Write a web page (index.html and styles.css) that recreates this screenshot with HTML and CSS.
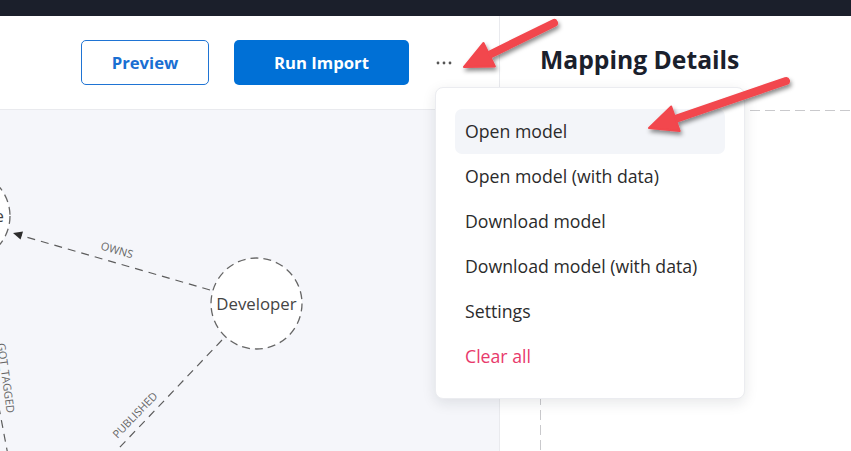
FILE: index.html
```html
<!DOCTYPE html>
<html lang="en">
<head>
<meta charset="utf-8">
<title>Mapping</title>
<link rel="stylesheet" href="styles.css">
</head>
<body>
<div class="topbar"></div>
<div class="main">
  <section class="left">
    <header class="toolbar">
      <button class="btn btn-outline">Preview</button>
      <button class="btn btn-primary">Run Import</button>
      <button class="more" aria-label="More">
        <svg width="16" height="4" viewBox="0 0 16 4"><circle cx="2" cy="2" r="1.4"/><circle cx="8" cy="2" r="1.4"/><circle cx="14" cy="2" r="1.4"/></svg>
      </button>
    </header>
    <div class="canvas">
      <svg class="graph" width="499" height="341" viewBox="0 0 499 341">
        <g class="edge">
          <line x1="-19.5" y1="200" x2="10.8" y2="360"/>
          <line x1="210" y1="180" x2="21" y2="125.5"/>
          <line x1="222" y1="230" x2="100" y2="358"/>
        </g>
        <polygon class="head" points="13,123 23,121.5 20.5,129.5"/>
        <text class="elabel" x="117" y="144" transform="rotate(16 117 140)">OWNS</text>
        <text class="elabel" x="135" y="309" transform="rotate(-46 135 305)">PUBLISHED</text>
        <text class="elabel" x="6" y="272" transform="rotate(82 6 268)">GOT_TAGGED</text>
        <circle class="node" cx="-35" cy="106" r="45"/>
        <text class="nlabel end" x="4" y="112">Package</text>
        <circle class="node" cx="256.5" cy="193.5" r="45.5"/>
        <text class="nlabel" x="256.5" y="199.5">Developer</text>
      </svg>
    </div>
  </section>
  <section class="right">
    <div class="right-head"><h2 class="title">Mapping Details</h2></div>
    <div class="dropzone"></div>
  </section>
</div>
<div class="menu">
  <div class="item active">Open model</div>
  <div class="item">Open model (with data)</div>
  <div class="item">Download model</div>
  <div class="item">Download model (with data)</div>
  <div class="item">Settings</div>
  <div class="item danger">Clear all</div>
</div>
<svg class="annot" width="851" height="451" viewBox="0 0 851 451">
  <defs>
    <filter id="sh" x="-20%" y="-20%" width="140%" height="140%">
      <feDropShadow dx="1.5" dy="3" stdDeviation="2" flood-color="#000" flood-opacity="0.45"/>
    </filter>
  </defs>
  <g filter="url(#sh)" class="arrow">
    <line x1="554" y1="23" x2="490" y2="54.5"/>
    <polygon points="464,67 483.5,43 494.9,66.4"/>
  </g>
  <g filter="url(#sh)" class="arrow">
    <line x1="786" y1="81" x2="676" y2="118.8"/>
    <polygon points="649,128 671.2,106.5 679.7,131.1"/>
  </g>
</svg>
</body>
</html>
```
FILE: styles.css
```css
* { box-sizing: border-box; margin: 0; padding: 0; }
html, body { width: 851px; height: 451px; overflow: hidden; }
body {
  font-family: "Open Sans", "Noto Sans", sans-serif;
  background: #fff;
  color: #2b2b2b;
  position: relative;
}
.topbar { height: 16px; background: #1b1f2b; }
.main { display: flex; height: 435px; }
.left {
  width: 500px;
  flex: none;
  border-right: 1px solid #e9eaee;
  display: flex;
  flex-direction: column;
}
.toolbar {
  height: 94px;
  flex: none;
  border-bottom: 1px solid #e9eaee;
  display: flex;
  align-items: center;
  justify-content: flex-end;
  padding-right: 47px;
  background: #fff;
}
.btn {
  height: 45px;
  border-radius: 5px;
  font-family: inherit;
  font-weight: 700;
  font-size: 16.7px;
  cursor: pointer;
}
.btn-outline {
  width: 128px;
  border: 1px solid #1f74d4;
  color: #1a6fd2;
  background: #fff;
}
.btn-primary {
  width: 175px;
  margin-left: 25px;
  border: none;
  background: #0070d6;
  color: #fff;
}
.more {
  width: 16px;
  height: 16px;
  margin-left: 27px;
  border: none;
  background: none;
  display: flex;
  align-items: center;
  justify-content: center;
}
.more svg { fill: #555; display: block; }
.canvas { flex: 1; background: #f5f6fa; overflow: hidden; }
.graph { display: block; overflow: hidden; }
.edge line { stroke: #5c5c5c; stroke-width: 1.2; stroke-dasharray: 8 6; }
.head { fill: #2d2d2d; }
.elabel { font-size: 11px; fill: #666; text-anchor: middle; font-family: "Open Sans", sans-serif; }
.node { fill: #fff; stroke: #666; stroke-width: 1.3; stroke-dasharray: 8 5; }
.nlabel { font-size: 16.8px; fill: #444; text-anchor: middle; font-family: "Open Sans", sans-serif; }
.nlabel.end { text-anchor: end; }
.right { flex: 1; padding-left: 40px; display: flex; flex-direction: column; }
.right-head { height: 94px; flex: none; display: flex; align-items: center; padding-bottom: 6px; }
.title { font-size: 24.7px; font-weight: 700; color: #1a202c; line-height: 30px; }
.dropzone {
  flex: 1;
  width: 400px;
  background-image:
    linear-gradient(to right, #c9c9cc 10px, transparent 10px),
    linear-gradient(to bottom, #c9c9cc 10px, transparent 10px);
  background-size: 15px 1px, 1px 15px;
  background-repeat: repeat-x, repeat-y;
  background-position: 0 0, 0 0;
}
.menu {
  position: absolute;
  left: 435px;
  top: 87px;
  width: 310px;
  height: 312px;
  background: #fff;
  border: 1px solid #ebecf0;
  border-radius: 8px;
  box-shadow: 0 4px 14px rgba(20, 25, 40, 0.1);
  padding: 21px 19px;
}
.item {
  height: 45px;
  line-height: 45px;
  padding-left: 10px;
  font-size: 17.7px;
  color: #2b2b2b;
  border-radius: 7px;
}
.item.active { background: #f3f5f9; }
.item.danger { color: #e8396b; }
.annot { position: absolute; left: 0; top: 0; pointer-events: none; }
.arrow line { stroke: #f2464d; stroke-width: 8; stroke-linecap: round; }
.arrow polygon { fill: #f2464d; stroke: #f2464d; stroke-width: 2; stroke-linejoin: round; }
```
